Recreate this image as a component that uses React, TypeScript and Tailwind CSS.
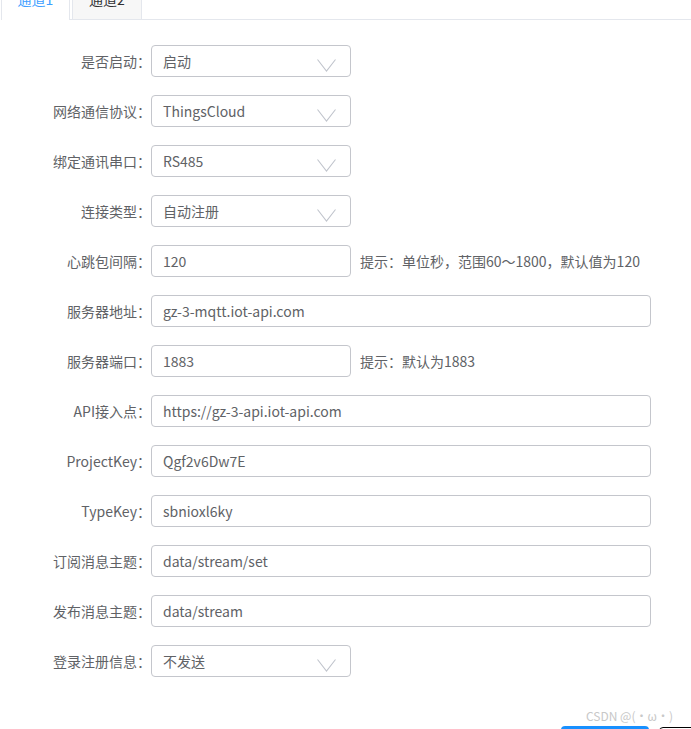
import React from "react";

const font = { fontFamily: '"Noto Sans CJK SC", "Noto Sans", sans-serif' };

function Chevron() {
  return (
    <svg width="19" height="13" viewBox="0 0 19 13" className="absolute right-[14px] top-[13px]">
      <polyline points="0.5,0.5 9.5,12 18.5,0.5" fill="none" stroke="#c0c4cc" strokeWidth="1.1" />
    </svg>
  );
}

type Row = { label: string; value: string; kind: "select" | "short" | "full"; hint?: string };

const rows: Row[] = [
  { label: "是否启动：", value: "启动", kind: "select" },
  { label: "网络通信协议：", value: "ThingsCloud", kind: "select" },
  { label: "绑定通讯串口：", value: "RS485", kind: "select" },
  { label: "连接类型：", value: "自动注册", kind: "select" },
  { label: "心跳包间隔：", value: "120", kind: "short", hint: "提示：单位秒，范围60～1800，默认值为120" },
  { label: "服务器地址：", value: "gz-3-mqtt.iot-api.com", kind: "full" },
  { label: "服务器端口：", value: "1883", kind: "short", hint: "提示：默认为1883" },
  { label: "API接入点：", value: "https://gz-3-api.iot-api.com", kind: "full" },
  { label: "ProjectKey：", value: "Qgf2v6Dw7E", kind: "full" },
  { label: "TypeKey：", value: "sbnioxl6ky", kind: "full" },
  { label: "订阅消息主题：", value: "data/stream/set", kind: "full" },
  { label: "发布消息主题：", value: "data/stream", kind: "full" },
  { label: "登录注册信息：", value: "不发送", kind: "select" },
];

export default function App() {
  return (
    <div className="relative h-[729px] w-[691px] overflow-hidden bg-white text-[14px] text-[#606266]" style={font}>
      {/* tabs */}
      <div className="flex h-[20px]">
        <div className="ml-px h-[20px] w-[69px] overflow-hidden border-x border-[#e4e7ed] bg-white">
          <div className="-mt-[20px] flex h-[38px] items-center justify-center text-[#409eff]">通道1</div>
        </div>
        <div className="h-[20px] w-[2px] border-b border-[#e4e7ed]" />
        <div className="h-[20px] w-[70px] overflow-hidden border-x border-b border-[#e4e7ed] bg-[#f7f7f7]">
          <div className="-mt-[20px] flex h-[38px] items-center justify-center text-[#303133]">通道2</div>
        </div>
        <div className="h-[20px] flex-1 border-b border-[#e4e7ed]" />
      </div>

      {/* form */}
      <div className="flex flex-col gap-[18px] pt-[25px]">
        {rows.map((r) => (
          <div key={r.label} className="flex h-[32px] items-center">
            <div className="w-[151px] text-right leading-[32px]">{r.label}</div>
            <div
              className={
                "relative flex h-[32px] items-center rounded-[4px] border border-[#c4c6cc] bg-white px-[11px] " +
                (r.kind === "full" ? "w-[500px]" : "w-[200px]")
              }
            >
              <span>{r.value}</span>
              {r.kind === "select" && <Chevron />}
            </div>
            {r.hint && <div className="ml-[9px]">{r.hint}</div>}
          </div>
        ))}
      </div>

      {/* bottom overlays */}
      <div className="absolute left-[586px] top-[707px] text-[12px] text-[#c8c8c8]">CSDN @(・ω・)</div>
      <div className="absolute left-[561px] top-[726px] h-[10px] w-[88px] rounded-[4px] bg-[#1890ff]" />
      <div className="absolute left-[659px] top-[727px] h-[10px] w-[40px] rounded-[4px] border border-black bg-white" />
    </div>
  );
}
